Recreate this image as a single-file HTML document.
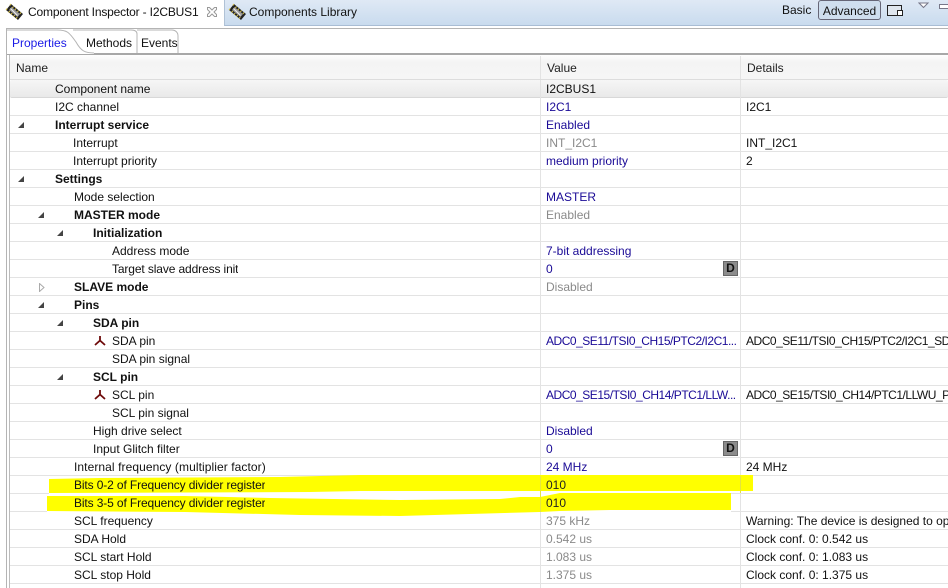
<!DOCTYPE html>
<html><head><meta charset="utf-8"><style>
html,body{margin:0;padding:0}
body{width:948px;height:588px;overflow:hidden;background:#fff;position:relative;font:12px "Liberation Sans",sans-serif;color:#111}
.a{position:absolute;white-space:nowrap}
.r{position:absolute;left:10px;width:938px;height:17px;border-bottom:1px solid #e3e3e3}
.t{position:absolute;top:0;line-height:18px;white-space:nowrap;overflow:hidden}
.n{color:#111}.b{font-weight:bold}
.v{left:536px;width:200px;color:#1a0a96}
.g{left:536px;width:200px;color:#8a8a8a}
.k{left:536px;width:200px;color:#111}
.d{left:736px;width:210px;color:#111}
.c{position:absolute;top:0;width:1px;height:18px;background:#e3e3e3}
.tri{position:absolute}
.D{position:absolute;left:713px;top:1px;width:15px;height:15px;background:#8c8c8c;border:1px solid #666;box-sizing:border-box;font:bold 12px/13px "Liberation Sans",sans-serif;text-align:center;color:#111}
.sq{letter-spacing:-.48px}
</style></head><body>
<!-- top tab bar -->
<div class="a" style="left:224px;top:0;width:724px;height:25px;background:linear-gradient(#dfe9f5,#c9dbee);border-bottom:1px solid #a9bdd4;border-left:1px solid #b0c2d6"></div>
<svg class="a" style="left:5px;top:3px" width="19" height="18" viewBox="0 0 19 18"><path d="M1 7 6 1 18 11 13 17Z" fill="#222"/><path d="M4 7 6.500 4 15 11 12.500 14Z" fill="#999"/><path d="M5.500 5.500l7 7" stroke="#eee" stroke-width="1"/><path d="M1 7l5-6M3.500 9.500l5-6M6 11.500l5-6M8.500 13.500l5-6M11 15.500l5-6" stroke="#d8c34a" stroke-width="1" stroke-dasharray="2 4"/></svg>
<div class="a" style="left:28px;top:4px;line-height:16px;color:#111;letter-spacing:-.17px">Component Inspector - I2CBUS1</div>
<svg class="a" style="left:206px;top:6px" width="12" height="12" viewBox="0 0 12 12"><path d="M1.500 1.500h2l2.500 2.500 2.500-2.500h2v2L8 6l2.500 2.500v2h-2L6 8l-2.500 2.500h-2v-2L4 6 1.500 3.500Z" fill="#fff" stroke="#999"/></svg>
<svg class="a" style="left:228px;top:3px" width="19" height="18" viewBox="0 0 19 18"><path d="M1 7 6 1 18 11 13 17Z" fill="#222"/><path d="M4 7 6.500 4 15 11 12.500 14Z" fill="#999"/><path d="M5.500 5.500l7 7" stroke="#eee" stroke-width="1"/><path d="M1 7l5-6M3.500 9.500l5-6M6 11.500l5-6M8.500 13.500l5-6M11 15.500l5-6" stroke="#d8c34a" stroke-width="1" stroke-dasharray="2 4"/></svg>
<div class="a" style="left:249px;top:4px;line-height:16px;color:#111">Components Library</div>
<div class="a" style="left:782px;top:2px;line-height:16px;color:#111">Basic</div>
<div class="a" style="left:818px;top:0;width:63px;height:20px;box-sizing:border-box;border:1px solid #667;border-radius:3px;background:#cfdeee;line-height:20px;text-align:center;color:#111">Advanced</div>
<div class="a" style="left:887px;top:5px;width:13px;height:9px;border:1px solid #222;background:#dfe6ee"></div>
<div class="a" style="left:897px;top:10px;width:4px;height:4px;border:1px solid #222;background:#fff"></div>
<svg class="a" style="left:918px;top:2px" width="12" height="7"><path d="M1 1h9L5.500 5.500Z" fill="#fff" stroke="#778"/></svg>
<div class="a" style="left:939px;top:4px;width:9px;height:3px;border:1px solid #778;border-right:0;background:#fff"></div>
<!-- folder frame -->
<div class="a" style="left:6px;top:28px;width:942px;height:1px;background:#b4b4b4"></div>
<div class="a" style="left:6px;top:28px;width:1px;height:560px;background:#b4b4b4"></div>
<div class="a" style="left:9px;top:53px;width:1px;height:535px;background:#bcbcbc"></div>
<div class="a" style="left:7px;top:53px;width:941px;height:2px;background:#a8a8a8"></div>
<!-- tabs -->
<svg class="a" style="left:7px;top:29px" width="175" height="26" viewBox="0 0 175 26"><path d="M0 0H50C60 0 62 3 69 13C74 22 78 24 87 24V25H0Z" fill="#fff"/><path d="M0 1H50C60 1 62 3 69 13C74 22 78 24 87 24" fill="none" stroke="#b4b4b4"/><path d="M130 24V5C130 2 127 1 124 1H66" fill="none" stroke="#b4b4b4"/><path d="M171 24V7C171 3 168 1 165 1H130" fill="none" stroke="#b4b4b4"/></svg>
<div class="a" style="left:12px;top:35px;line-height:16px;color:#1a1ae6">Properties</div>
<div class="a" style="left:86px;top:35px;line-height:16px">Methods</div>
<div class="a" style="left:141px;top:35px;line-height:16px">Events</div>
<!-- header -->
<div class="a" style="left:10px;top:55px;width:938px;height:24px;background:linear-gradient(#fff,#f4f4f4 30%,#f6f6f6);border-bottom:1px solid #ddd"></div>
<div class="a" style="left:540px;top:56px;width:1px;height:23px;background:#e3e3e3"></div>
<div class="a" style="left:740px;top:56px;width:1px;height:23px;background:#e3e3e3"></div>
<div class="a" style="left:16px;top:60px;line-height:16px;color:#222">Name</div>
<div class="a" style="left:547px;top:60px;line-height:16px;color:#222">Value</div>
<div class="a" style="left:747px;top:60px;line-height:16px;color:#222">Details</div>
<!-- rows -->
<div class="r" style="top:80px;background:linear-gradient(#f6f6f6,#e9e9e9);border-radius:2px;border-bottom-color:#d8d8d8"><div class="c" style="left:530px"></div><div class="c" style="left:730px"></div><div class="t n" style="left:45px;width:97px">Component name</div><div class="t k">I2CBUS1</div></div>
<div class="r" style="top:98px"><div class="c" style="left:530px"></div><div class="c" style="left:730px"></div><div class="t n" style="left:45px">I2C channel</div><div class="t v">I2C1</div><div class="t d">I2C1</div></div>
<div class="r" style="top:116px"><div class="c" style="left:530px"></div><div class="c" style="left:730px"></div><svg class="tri" style="left:8px;top:6px" width="7" height="7"><path d="M6 0V6H0Z" fill="#444"/></svg><div class="t n b" style="left:45px">Interrupt service</div><div class="t v">Enabled</div></div>
<div class="r" style="top:134px"><div class="c" style="left:530px"></div><div class="c" style="left:730px"></div><div class="t n" style="left:63px">Interrupt</div><div class="t g">INT_I2C1</div><div class="t d">INT_I2C1</div></div>
<div class="r" style="top:152px"><div class="c" style="left:530px"></div><div class="c" style="left:730px"></div><div class="t n" style="left:63px">Interrupt priority</div><div class="t v">medium priority</div><div class="t d">2</div></div>
<div class="r" style="top:170px"><div class="c" style="left:530px"></div><div class="c" style="left:730px"></div><svg class="tri" style="left:8px;top:6px" width="7" height="7"><path d="M6 0V6H0Z" fill="#444"/></svg><div class="t n b" style="left:45px">Settings</div></div>
<div class="r" style="top:188px"><div class="c" style="left:530px"></div><div class="c" style="left:730px"></div><div class="t n" style="left:64px">Mode selection</div><div class="t v">MASTER</div></div>
<div class="r" style="top:206px"><div class="c" style="left:530px"></div><div class="c" style="left:730px"></div><svg class="tri" style="left:28px;top:6px" width="7" height="7"><path d="M6 0V6H0Z" fill="#444"/></svg><div class="t n b" style="left:64px">MASTER mode</div><div class="t g">Enabled</div></div>
<div class="r" style="top:224px"><div class="c" style="left:530px"></div><div class="c" style="left:730px"></div><svg class="tri" style="left:47px;top:6px" width="7" height="7"><path d="M6 0V6H0Z" fill="#444"/></svg><div class="t n b" style="left:83px">Initialization</div></div>
<div class="r" style="top:242px"><div class="c" style="left:530px"></div><div class="c" style="left:730px"></div><div class="t n" style="left:102px">Address mode</div><div class="t v">7-bit addressing</div></div>
<div class="r" style="top:260px"><div class="c" style="left:530px"></div><div class="c" style="left:730px"></div><div class="t n" style="left:102px;letter-spacing:-.12px">Target slave address init</div><div class="t v">0</div><div class="D">D</div></div>
<div class="r" style="top:278px"><div class="c" style="left:530px"></div><div class="c" style="left:730px"></div><svg class="tri" style="left:29px;top:5px" width="6" height="9"><path d="M.5.5 5 4.500.5 8.500Z" fill="#fff" stroke="#aaa"/></svg><div class="t n b" style="left:64px">SLAVE mode</div><div class="t g">Disabled</div></div>
<div class="r" style="top:296px"><div class="c" style="left:530px"></div><div class="c" style="left:730px"></div><svg class="tri" style="left:28px;top:6px" width="7" height="7"><path d="M6 0V6H0Z" fill="#444"/></svg><div class="t n b" style="left:64px">Pins</div></div>
<div class="r" style="top:314px"><div class="c" style="left:530px"></div><div class="c" style="left:730px"></div><svg class="tri" style="left:47px;top:6px" width="7" height="7"><path d="M6 0V6H0Z" fill="#444"/></svg><div class="t n b" style="left:83px">SDA pin</div></div>
<div class="r" style="top:332px"><div class="c" style="left:530px"></div><div class="c" style="left:730px"></div><svg class="tri" style="left:84px;top:3px" width="12" height="11"><path d="M6 1V5.500M6 5.500L1 10M6 5.500L11 10" fill="none" stroke="#6e0a0a" stroke-width="1.800"/></svg><div class="t n" style="left:102px">SDA pin</div><div class="t v sq">ADC0_SE11/TSI0_CH15/PTC2/I2C1...</div><div class="t d sq">ADC0_SE11/TSI0_CH15/PTC2/I2C1_SDA/</div></div>
<div class="r" style="top:350px"><div class="c" style="left:530px"></div><div class="c" style="left:730px"></div><div class="t n" style="left:102px">SDA pin signal</div></div>
<div class="r" style="top:368px"><div class="c" style="left:530px"></div><div class="c" style="left:730px"></div><svg class="tri" style="left:47px;top:6px" width="7" height="7"><path d="M6 0V6H0Z" fill="#444"/></svg><div class="t n b" style="left:83px">SCL pin</div></div>
<div class="r" style="top:386px"><div class="c" style="left:530px"></div><div class="c" style="left:730px"></div><svg class="tri" style="left:84px;top:3px" width="12" height="11"><path d="M6 1V5.500M6 5.500L1 10M6 5.500L11 10" fill="none" stroke="#6e0a0a" stroke-width="1.800"/></svg><div class="t n" style="left:102px">SCL pin</div><div class="t v sq">ADC0_SE15/TSI0_CH14/PTC1/LLW...</div><div class="t d sq">ADC0_SE15/TSI0_CH14/PTC1/LLWU_P6/</div></div>
<div class="r" style="top:404px"><div class="c" style="left:530px"></div><div class="c" style="left:730px"></div><div class="t n" style="left:102px">SCL pin signal</div></div>
<div class="r" style="top:422px"><div class="c" style="left:530px"></div><div class="c" style="left:730px"></div><div class="t n" style="left:83px">High drive select</div><div class="t v">Disabled</div></div>
<div class="r" style="top:440px"><div class="c" style="left:530px"></div><div class="c" style="left:730px"></div><div class="t n" style="left:83px;width:89px">Input Glitch filter</div><div class="t v">0</div><div class="D">D</div></div>
<div class="r" style="top:458px"><div class="c" style="left:530px"></div><div class="c" style="left:730px"></div><div class="t n" style="left:64px;letter-spacing:.08px">Internal frequency (multiplier factor)</div><div class="t v">24 MHz</div><div class="t d">24 MHz</div></div>
<svg class="a" style="left:0;top:470px" width="948" height="50" viewBox="0 470 948 50"><path d="M49 479L100 478L280 477L360 475H753V491H360L310 492L49 493Z" fill="#ff0"/><path d="M47 496H185L270 498L400 500L500 499L520 497H540L560 493H731V510H610L560 511L540 512L400 516L300 515L185 512L47 511Z" fill="#ff0"/></svg>
<div class="r" style="top:476px;background:transparent;border-bottom-color:transparent"><div class="c" style="left:530px;background:#e6e640"></div><div class="c" style="left:730px;background:#e3e340"></div><div class="t n" style="left:64px;width:191px;letter-spacing:-.12px">Bits 0-2 of Frequency divider register</div><div class="t" style="left:536px;color:#222">010</div></div>
<div class="r" style="top:494px;background:transparent;border-bottom-color:transparent"><div class="c" style="left:530px;background:#e6e640"></div><div class="c" style="left:730px;background:#e3e3e3"></div><div class="t n" style="left:64px;width:191px;letter-spacing:-.12px">Bits 3-5 of Frequency divider register</div><div class="t" style="left:536px;color:#222">010</div></div>
<div class="a" style="left:731px;top:493px;width:217px;height:1px;background:#e3e3e3"></div>
<div class="a" style="left:10px;top:493px;width:39px;height:1px;background:#e3e3e3"></div>
<div class="a" style="left:10px;top:511px;width:37px;height:1px;background:#e3e3e3"></div>
<div class="a" style="left:731px;top:511px;width:217px;height:1px;background:#e3e3e3"></div>
<div class="r" style="top:512px"><div class="c" style="left:530px"></div><div class="c" style="left:730px"></div><div class="t n" style="left:64px">SCL frequency</div><div class="t g">375 kHz</div><div class="t d">Warning: The device is designed to operate</div></div>
<div class="r" style="top:530px"><div class="c" style="left:530px"></div><div class="c" style="left:730px"></div><div class="t n" style="left:64px">SDA Hold</div><div class="t g">0.542 us</div><div class="t d">Clock conf. 0: 0.542 us</div></div>
<div class="r" style="top:548px"><div class="c" style="left:530px"></div><div class="c" style="left:730px"></div><div class="t n" style="left:64px">SCL start Hold</div><div class="t g">1.083 us</div><div class="t d">Clock conf. 0: 1.083 us</div></div>
<div class="r" style="top:566px"><div class="c" style="left:530px"></div><div class="c" style="left:730px"></div><div class="t n" style="left:64px">SCL stop Hold</div><div class="t g">1.375 us</div><div class="t d">Clock conf. 0: 1.375 us</div></div>
<div class="r" style="top:584px;border:0;height:4px"><div class="c" style="left:530px;height:4px"></div><div class="c" style="left:730px;height:4px"></div></div>
</body></html>
